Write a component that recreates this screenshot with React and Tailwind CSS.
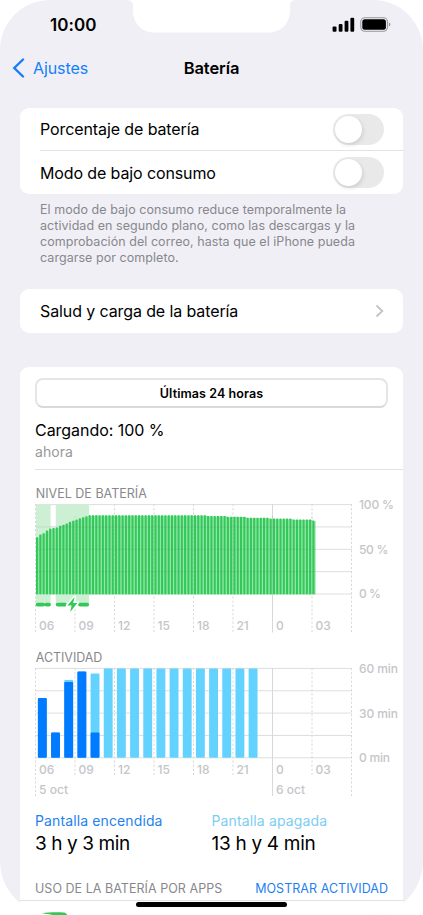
import React from "react";

const hours = ["06", "09", "12", "15", "18", "21", "0", "03"];
const GRID = 39.5;

// top edge of every battery level column, one per quarter of an hour
const levelTops = Array.from({ length: 85 }, (_, i) => {
  const rise = [537.3, 534.6, 533.2, 530.5, 528.6, 527.9, 527.6, 525.8, 524.8, 523.4, 521.8, 520.7, 519.6, 518.3, 517.2, 516.3, 515.2];
  if (i < rise.length) return rise[i];
  if (i < 52) return 515.2;
  if (i < 58) return 515.9;
  if (i < 64) return 516.8;
  if (i < 71) return 517.7;
  if (i < 78) return 518.6;
  if (i < 84) return 519.4;
  return 520.5;
});

const activity = [
  { on: 698, off: 698 },
  { on: 732.5, off: 732.5 },
  { on: 682, off: 680 },
  { on: 671.5, off: 671.5 },
  { on: 732.5, off: 673.5 },
  ...Array(12).fill({ on: 758, off: 668.5 }),
];

const Notch = () => (
  <svg className="absolute left-[127px] top-0" width="169" height="33" viewBox="0 0 169 33">
    <path d="M0 0C4 0 6 2 6 6V10C6 23 14 32.5 28 32.5H141C155 32.5 163 23 163 10V6C163 2 165 0 169 0Z" fill="#fff" />
  </svg>
);

const StatusBar = () => (
  <div className="flex h-[50px] items-center justify-between pl-[50px] pr-[32px]">
    <span className="pt-px text-[17px] font-semibold tracking-[0.05px]">10:00</span>
    <svg className="mb-[2px]" width="59" height="16" viewBox="0 0 59 16">
      <rect x="0.6" y="10.4" width="3.9" height="5.4" rx="1.1" />
      <rect x="6.7" y="8" width="3.8" height="7.8" rx="1.1" />
      <rect x="12.6" y="4.7" width="3.8" height="11.1" rx="1.1" />
      <rect x="18.4" y="1.7" width="3.8" height="14.1" rx="1.1" />
      <rect x="28.8" y="1.7" width="26.6" height="13.6" rx="4" fill="none" stroke="#98979c" strokeWidth="1.1" />
      <rect x="30.3" y="3.3" width="23.6" height="10.4" rx="2.5" />
      <path d="M56.9 6.5v4c.9-.3 1.5-1.1 1.5-2s-.6-1.7-1.5-2z" fill="#98979c" />
    </svg>
  </div>
);

const NavBar = () => (
  <div className="grid h-9 grid-cols-[1fr_auto_1fr] items-center px-[12px]">
    <div className="flex items-center gap-[8px] text-[#157efb]">
      <svg width="13" height="20" viewBox="0 0 13 20" fill="none" stroke="currentColor" strokeWidth="2.4">
        <path d="M11 1.5L2.3 10L11 18.5" strokeLinecap="round" strokeLinejoin="miter" />
      </svg>
      <span className="text-[16px] tracking-[-0.1px]">Ajustes</span>
    </div>
    <h1 className="text-[16.5px] font-semibold tracking-[-0.1px]">Batería</h1>
    <span />
  </div>
);

const Toggle = () => (
  <div className="h-[31px] w-[51px] rounded-full bg-[#e9e9ea] p-[2px]">
    <div className="h-[27px] w-[27px] rounded-full bg-white shadow-[1px_2px_4px_rgba(0,0,0,0.12)]" />
  </div>
);

const VerticalLines = ({ top, bottom, longBottom }) => (
  <g stroke="#d8d8da" strokeWidth="1">
    {Array.from({ length: 9 }, (_, i) => {
      const x = 35.5 + i * GRID;
      const end = i === 0 || i === 6 || i === 8 ? longBottom : bottom;
      return <line key={i} x1={x} x2={x} y1={top} y2={end} strokeDasharray={i === 6 ? undefined : "2.2 2"} />;
    })}
  </g>
);

const HorizontalLines = ({ top }) => (
  <g stroke="#dededf" strokeWidth="1">
    {[0, 1, 2, 3, 4].map((i) => (
      <line key={i} x1="35.5" x2="352" y1={top + i * 22.35} y2={top + i * 22.35} />
    ))}
  </g>
);

const LevelChart = () => (
  <svg className="block font-['Inter',sans-serif]" width="383" height="152" viewBox="20 484 383 152">
    <text x="35.8" y="497.6" fontSize="12.5" fill="#88888c" textLength="111">NIVEL DE BATERÍA</text>
    <HorizontalLines top={504.6} />
    <VerticalLines top={504} bottom={632} longBottom={632.5} />
    <rect x="36" y="504.6" width="14.6" height="101" fill="#cdf0d5" />
    <rect x="55.8" y="504.6" width="33.3" height="101" fill="#cdf0d5" />
    {levelTops.map((y, i) => (
      <g key={i}>
        <rect x={36 + i * 3.29} y={y + 0.6} width="3.29" height={593.9 - y} fill="#92e8aa" />
        <rect x={36 + i * 3.29} y={y} width="2.1" height={594.2 - y} rx="0.4" fill="#34c759" />
      </g>
    ))}
    <g stroke="#6b7c70" strokeOpacity="0.15">
      {[526.95, 549.3, 571.65].map((y) => (
        <line key={y} x1="36" x2="315.5" y1={y} y2={y} />
      ))}
      {[1, 2, 3, 4, 5, 6, 7].map((i) => (
        <line key={i} x1={35.5 + i * GRID} x2={35.5 + i * GRID} y1="516" y2="594" strokeDasharray={i === 6 ? undefined : "2.2 2"} />
      ))}
    </g>
    <g stroke="#34c759" strokeWidth="3.8" strokeLinecap="round">
      <path d="M37.6 604.6H43M46.3 604.6H49M57.7 604.6H65M80 604.6H87.2" />
    </g>
    <path d="M74.6 597L67.4 605.4H71.6L70.2 612L77.4 603H73.2Z" fill="#34c759" stroke="#fff" strokeWidth="3" strokeLinejoin="round" paintOrder="stroke" />
    <g fontSize="12" fontWeight="500" fill="#c5c5c8">
      {hours.map((h, i) => (
        <text key={h} x={39 + i * GRID} y="629.8" letterSpacing="-0.1">{h}</text>
      ))}
      <text x="359" y="509.3" textLength="35">100 %</text>
      <text x="359" y="553.8" textLength="29.4">50 %</text>
      <text x="359" y="598.2" textLength="21.8">0 %</text>
    </g>
  </svg>
);

const ActivityChart = () => (
  <svg className="block font-['Inter',sans-serif]" width="383" height="162" viewBox="20 636 383 162">
    <text x="35.8" y="661.5" fontSize="12.5" fill="#88888c" textLength="66.5">ACTIVIDAD</text>
    <HorizontalLines top={668.4} />
    <VerticalLines top={668} bottom={775} longBottom={796} />
    {activity.map(({ on, off }, i) => (
      <g key={i}>
        <rect x={37.9 + i * 13.17} y={off} width="8.9" height={757.8 - off} rx="1" fill="#64d2ff" />
        {on < 758 && <rect x={37.9 + i * 13.17} y={on} width="8.9" height={757.8 - on} rx="1" fill="#007aff" />}
      </g>
    ))}
    <g fontSize="12" fontWeight="500" fill="#c5c5c8">
      {hours.map((h, i) => (
        <text key={h} x={39 + i * GRID} y="774" letterSpacing="-0.1">{h}</text>
      ))}
      <text x="39" y="794" textLength="29">5 oct</text>
      <text x="276" y="794" textLength="29">6 oct</text>
      <text x="359" y="673" textLength="39">60 min</text>
      <text x="359" y="717.5" textLength="39">30 min</text>
      <text x="359" y="762" textLength="31">0 min</text>
    </g>
  </svg>
);

const App = () => {
  return (
    <div className="relative h-[915px] w-[423px] overflow-hidden rounded-t-[50px] rounded-b-[54px] bg-[#f0eff5] font-['Inter',sans-serif] text-black">
      <Notch />
      <StatusBar />
      <NavBar />

      <div className="mx-[20px] mt-[22px] h-[86px] rounded-[9px] bg-white pl-[20px]">
        <div className="flex h-[43px] items-center justify-between border-b border-[#e2e2e4] pr-[19px]">
          <span className="text-[16px] tracking-[-0.1px]">Porcentaje de batería</span>
          <Toggle />
        </div>
        <div className="flex h-[43px] items-center justify-between pr-[19px]">
          <span className="text-[16px] tracking-[-0.12px]">Modo de bajo consumo</span>
          <Toggle />
        </div>
      </div>
      <p className="ml-[40px] mt-[8px] h-16 whitespace-nowrap text-[12.5px] leading-[16px] tracking-[0.05px] text-[#88878d]">
        El modo de bajo consumo reduce temporalmente la<br />
        actividad en segundo plano, como las descargas y la<br />
        comprobación del correo, hasta que el iPhone pueda<br />
        cargarse por completo.
      </p>

      <div className="mx-[20px] mt-[23px] flex h-[44px] items-center justify-between rounded-[9px] bg-white pl-[20px] pr-[19px]">
        <span className="text-[16px] tracking-[-0.11px]">Salud y carga de la batería</span>
        <svg width="9" height="14" viewBox="0 0 9 14" fill="none" stroke="#c4c4c7" strokeWidth="1.9">
          <path d="M1.5 1.5L7.3 7L1.5 12.5" />
        </svg>
      </div>

      <div className="mx-[20px] mt-[34px] h-[548px] rounded-t-[9px] bg-white pt-[11px]">
        <div className="mx-[15px] flex h-[30px] items-center justify-center rounded-[8px] border-2 border-[#e5e5e6] border-b-[#d9d9da] pt-[2px] text-[12.5px] font-semibold tracking-[0.08px]">
          Últimas 24 horas
        </div>
        <div className="ml-[15px] mt-[11px] h-[51px] border-b border-[#e2e2e4]">
          <div className="text-[16px] leading-[22px] tracking-[-0.05px]">Cargando: 100 %</div>
          <div className="text-[14px] leading-[22px] tracking-[0.05px] text-[#98989c]">ahora</div>
        </div>
        <div className="mt-[2px] pt-[12px]">
          <LevelChart />
          <ActivityChart />
        </div>
        <div className="grid grid-cols-[176.5px_1fr] pl-[15px] pt-[13px]">
          <div>
            <div className="text-[14px] leading-[20px] tracking-[0.12px] text-[#1f82ee]">Pantalla encendida</div>
            <div className="text-[19px] leading-[25px] tracking-[-0.4px]">3 h y 3 min</div>
          </div>
          <div>
            <div className="text-[14px] leading-[20px] tracking-[0.14px] text-[#7ccdf2]">Pantalla apagada</div>
            <div className="text-[19px] leading-[25px] tracking-[-0.3px]">13 h y 4 min</div>
          </div>
        </div>
        <div className="ml-[15px] mt-[23px] flex h-[20px] items-center justify-between pr-[15px] text-[12.5px] tracking-[0.04px]">
          <span className="text-[#88888c]">USO DE LA BATERÍA POR APPS</span>
          <span className="text-[#1f7ff0]">MOSTRAR ACTIVIDAD</span>
        </div>
        <div className="mt-[1px] h-[15px] border-t border-[#e2e2e4] pl-[22px] pt-[11px]">
          <svg width="26" height="4" viewBox="0 0 26 4">
            <path d="M0 1.3C6 0 18 0 22 .5C24 1 25 2 25.5 4H13C10 2.4 5 2.2 0 1.3Z" fill="#34c759" />
          </svg>
        </div>
      </div>

      <div className="absolute left-[136px] top-[902px] h-[5px] w-[151px] rounded-full bg-black" />
    </div>
  );
};

export default App;
